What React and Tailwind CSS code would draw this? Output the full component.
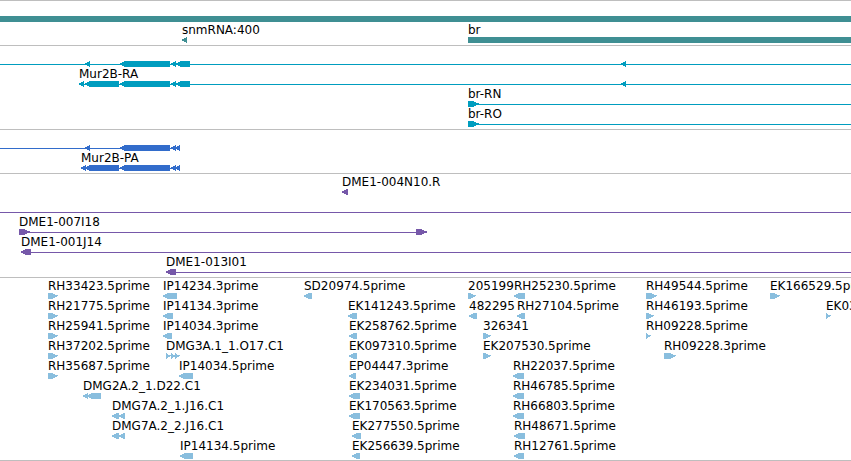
const GENE = '#3f8f93';
const MRNA = '#009dbf';
const CDS = '#326ccb';
const BAC = '#7658a9';
const EST = '#89bede';

// A shape is [start, end, kind]: 'l' and 'r' point left or right, 'bar' is a plain block.
// A line is [start, end]; a missing end runs on past the right edge.
const TRACKS = [
  {
    name: 'Genes',
    color: GENE,
    rows: [
      { shapes: [[0, null, 'bar']] },
      { labels: [[182, 'snmRNA:400'], [468, 'br']], shapes: [[182, 187, 'l'], [468, null, 'bar']] },
    ],
    className: 'gap-px pb-0.5',
  },
  {
    name: 'mRNA',
    color: MRNA,
    rows: [
      {
        lines: [[0]],
        shapes: [[85, 90, 'l'], [120, 170, 'l'], [171, 176, 'l'], [176, 190, 'l'], [621, 626, 'l']],
      },
      {
        labels: [[79, 'Mur2B-RA']],
        lines: [[79]],
        shapes: [[79, 84, 'l'], [85, 119, 'l'], [120, 170, 'l'], [171, 176, 'l'], [176, 190, 'l'], [621, 626, 'l']],
      },
      { labels: [[468, 'br-RN']], lines: [[468]], shapes: [[468, 479, 'r']] },
      { labels: [[468, 'br-RO']], lines: [[468]], shapes: [[468, 479, 'r']] },
    ],
    className: 'pb-0.5',
  },
  {
    name: 'CDS',
    color: CDS,
    rows: [
      { lines: [[0, 176]], shapes: [[85, 90, 'l'], [120, 170, 'l'], [171, 176, 'l'], [175, 180, 'l']] },
      {
        labels: [[81, 'Mur2B-PA']],
        lines: [[81, 176]],
        shapes: [[81, 86, 'l'], [85, 119, 'l'], [120, 170, 'l'], [171, 176, 'l'], [175, 180, 'l']],
      },
    ],
    className: 'pb-0.5',
  },
  {
    name: 'BAC',
    color: BAC,
    rows: [
      { labels: [[342, 'DME1-004N10.R']], shapes: [[342, 348, 'l']] },
      { lines: [[0]] },
      { labels: [[19, 'DME1-007I18']], lines: [[19, 427]], shapes: [[19, 30, 'r'], [416, 427, 'r']] },
      { labels: [[21, 'DME1-001J14']], lines: [[21]], shapes: [[21, 31, 'l']] },
      { labels: [[166, 'DME1-013I01']], lines: [[166]], shapes: [[166, 176, 'l']] },
    ],
    className: 'pb-0.5',
  },
  {
    name: 'EST',
    color: EST,
    rows: [
      {
        labels: [[48, 'RH33423.5prime'], [163, 'IP14234.3prime'], [304, 'SD20974.5prime'], [468, '205199'], [514, 'RH25230.5prime'], [646, 'RH49544.5prime'], [770, 'EK166529.5prime']],
        shapes: [[48, 58, 'r'], [163, 177, 'l'], [304, 312, 'l'], [468, 476, 'r'], [514, 525, 'l'], [646, 657, 'r'], [770, 780, 'r']],
      },
      {
        labels: [[48, 'RH21775.5prime'], [163, 'IP14134.3prime'], [348, 'EK141243.5prime'], [469, '482295'], [517, 'RH27104.5prime'], [646, 'RH46193.5prime'], [826, 'EK03']],
        shapes: [[48, 58, 'r'], [163, 173, 'l'], [348, 357, 'l'], [469, 477, 'l'], [517, 525, 'l'], [646, 654, 'r'], [826, 831, 'r']],
      },
      {
        labels: [[48, 'RH25941.5prime'], [163, 'IP14034.3prime'], [349, 'EK258762.5prime'], [483, '326341'], [646, 'RH09228.5prime']],
        shapes: [[48, 58, 'r'], [163, 172, 'l'], [349, 357, 'l'], [483, 491, 'r'], [646, 651, 'r']],
      },
      {
        labels: [[48, 'RH37202.5prime'], [166, 'DMG3A.1_1.O17.C1'], [349, 'EK097310.5prime'], [483, 'EK207530.5prime'], [664, 'RH09228.3prime']],
        shapes: [[48, 58, 'r'], [166, 171, 'r'], [171, 176, 'r'], [175, 180, 'r'], [349, 357, 'l'], [483, 491, 'r'], [664, 676, 'r']],
      },
      {
        labels: [[48, 'RH35687.5prime'], [179, 'IP14034.5prime'], [349, 'EP04447.3prime'], [513, 'RH22037.5prime']],
        shapes: [[48, 58, 'r'], [179, 193, 'l'], [349, 356, 'l'], [513, 524, 'l']],
      },
      {
        labels: [[83, 'DMG2A.2_1.D22.C1'], [349, 'EK234031.5prime'], [513, 'RH46785.5prime']],
        shapes: [[83, 88, 'l'], [87, 101, 'l'], [349, 360, 'l'], [513, 524, 'l']],
      },
      {
        labels: [[112, 'DMG7A.2_1.J16.C1'], [349, 'EK170563.5prime'], [513, 'RH66803.5prime']],
        shapes: [[112, 119, 'l'], [119, 125, 'l'], [349, 360, 'l'], [513, 524, 'l']],
      },
      {
        labels: [[112, 'DMG7A.2_2.J16.C1'], [352, 'EK277550.5prime'], [514, 'RH48671.5prime']],
        shapes: [[112, 119, 'l'], [119, 125, 'l'], [352, 361, 'l'], [514, 525, 'l']],
      },
      {
        labels: [[180, 'IP14134.5prime'], [352, 'EK256639.5prime'], [514, 'RH12761.5prime']],
        shapes: [[180, 193, 'l'], [352, 360, 'l'], [514, 524, 'l']],
      },
    ],
    className: 'pb-px',
  },
];

function Shape({ start, end, kind }) {
  if (kind === 'bar') return <rect x={start} y="0" width="100%" height="6" />;
  if (kind === 'l') {
    const neck = Math.min(start + 4, end);
    const mid = Math.min(start + 2, end);
    return (
      <polygon
        points={`${start},4 ${start},2 ${mid},2 ${mid},1 ${neck},1 ${neck},0 ${end},0 ${end},6 ${neck},6 ${neck},5 ${mid},5 ${mid},4`}
      />
    );
  }
  const neck = Math.max(end - 5, start + 1);
  const mid = Math.max(end - 3, start + 2);
  return (
    <polygon
      points={`${start},0 ${neck},0 ${neck},1 ${mid},1 ${mid},2 ${end},2 ${end},3 ${end - 1},3 ${end - 1},4 ${mid},4 ${mid},5 ${neck},5 ${neck},6 ${start},6`}
    />
  );
}

function Row({ labels = [], lines = [], shapes = [] }) {
  return (
    <div className="relative h-5 overflow-hidden pt-3.5">
      {labels.map(([x, text]) => (
        <span key={text} className="absolute top-0 leading-[14px] whitespace-nowrap" style={{ left: x }}>
          {text}
        </span>
      ))}
      <svg className="block h-1.5 w-full fill-current" shapeRendering="crispEdges" aria-hidden="true">
        {lines.map(([from, to]) => (
          <rect key={from} x={from} y="3" width={to ? to - from : '100%'} height="1" />
        ))}
        {shapes.map(([start, end, kind]) => (
          <Shape key={start} start={start} end={end} kind={kind} />
        ))}
      </svg>
    </div>
  );
}

export default function App() {
  return (
    <main className="w-full overflow-hidden border-t border-[#bebebe] bg-white font-['DejaVu_Sans',sans-serif] text-[12px]">
      {TRACKS.map((track) => (
        <section
          key={track.name}
          aria-label={track.name}
          className={`flex flex-col border-b border-[#bebebe] pt-px ${track.className} [&_span]:text-black`}
          style={{ color: track.color }}
        >
          {track.rows.map((row, i) => (
            <Row key={i} {...row} />
          ))}
        </section>
      ))}
    </main>
  );
}
